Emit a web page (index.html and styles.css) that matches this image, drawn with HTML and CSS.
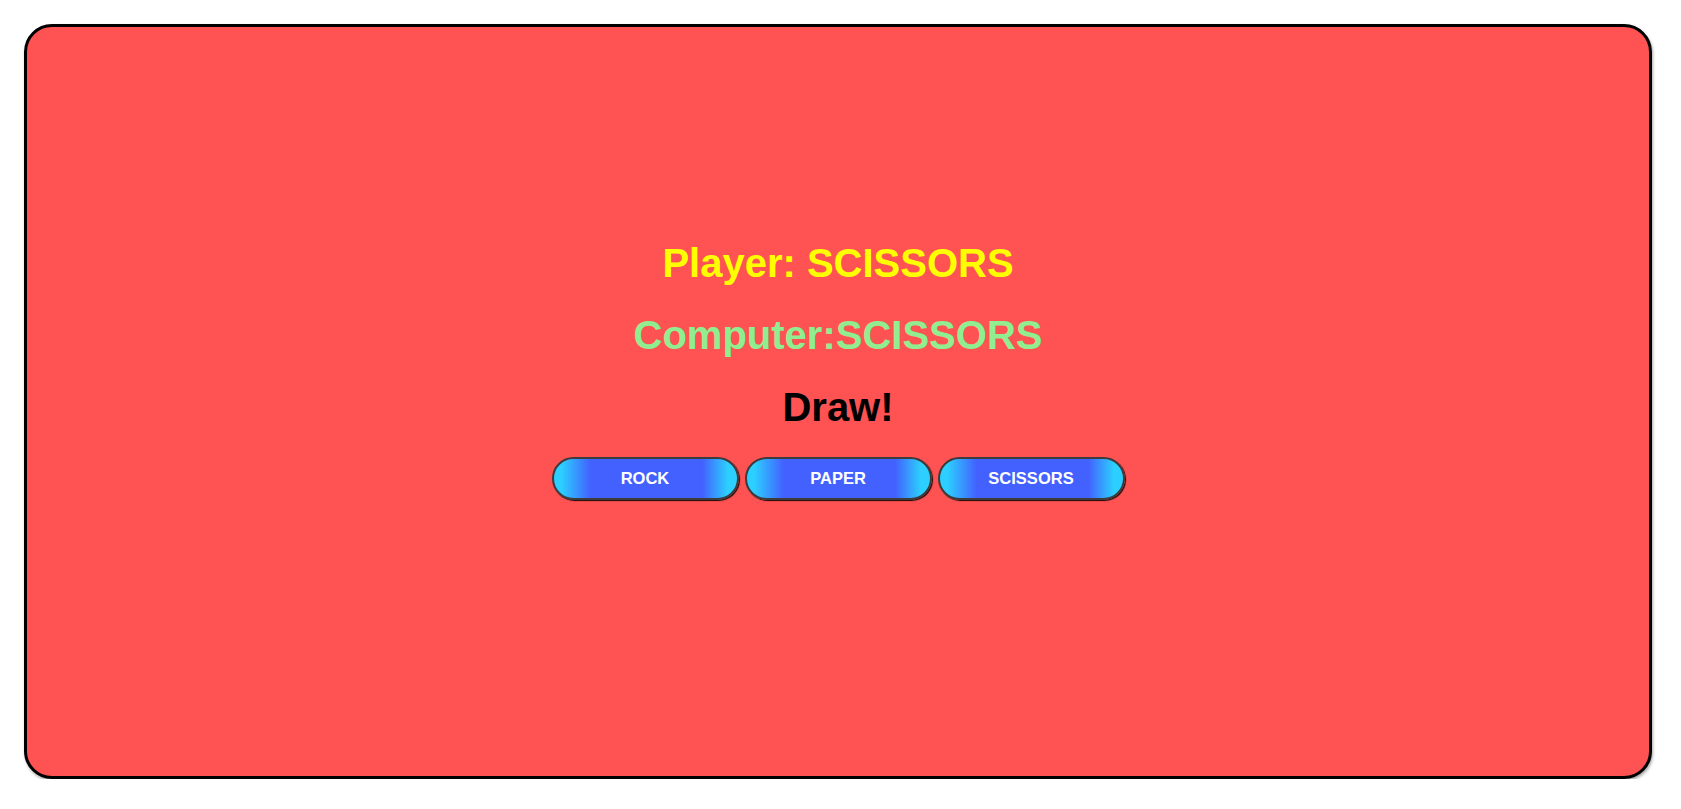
FILE: index.html
```html
<!DOCTYPE html>
<html>
<head>
<meta charset="utf-8">
<link rel="stylesheet" href="styles.css">
</head>
<body>
<div class="game">
  <div class="player">Player: SCISSORS</div>
  <div class="computer">Computer:SCISSORS</div>
  <div class="result">Draw!</div>
  <div class="choices">
    <button class="choice">ROCK</button>
    <button class="choice">PAPER</button>
    <button class="choice">SCISSORS</button>
  </div>
</div>
</body>
</html>
```
FILE: styles.css
```css
html, body {
  margin: 0;
  padding: 0;
  background: #ffffff;
}
body {
  font-family: "Liberation Sans", Arial, sans-serif;
  padding: 24px 29px 0 24px;
}
.game {
  box-sizing: border-box;
  height: 755px;
  background: #ff5252;
  border: 3px solid #000;
  border-radius: 28px;
  box-shadow: 1px 2px 3px rgba(0, 0, 0, 0.35);
  display: flex;
  flex-direction: column;
  align-items: center;
  padding-top: 213px;
}
.player, .computer, .result {
  font-size: 40px;
  font-weight: bold;
  line-height: 46px;
  text-align: center;
}
.player { color: #ffff00; }
.computer { color: #90ee90; margin-top: 26px; }
.result { color: #000; margin-top: 26px; }
.choices {
  margin-top: 27px;
  display: flex;
  gap: 6px;
}
.choice {
  box-sizing: border-box;
  width: 187px;
  height: 43px;
  border: 2px solid #3c3c3c;
  border-radius: 22px;
  background: linear-gradient(90deg, #2ccfff 0%, #2ccfff 4%, #4261fe 20%, #4261fe 81%, #2ccfff 95%, #2ccfff 100%);
  box-shadow: 1px 1px 1px rgba(0, 0, 0, 0.9);
  color: #fff;
  font-family: "Liberation Sans", Arial, sans-serif;
  font-size: 16.5px;
  font-weight: bold;
  padding: 0;
  cursor: pointer;
}
```
